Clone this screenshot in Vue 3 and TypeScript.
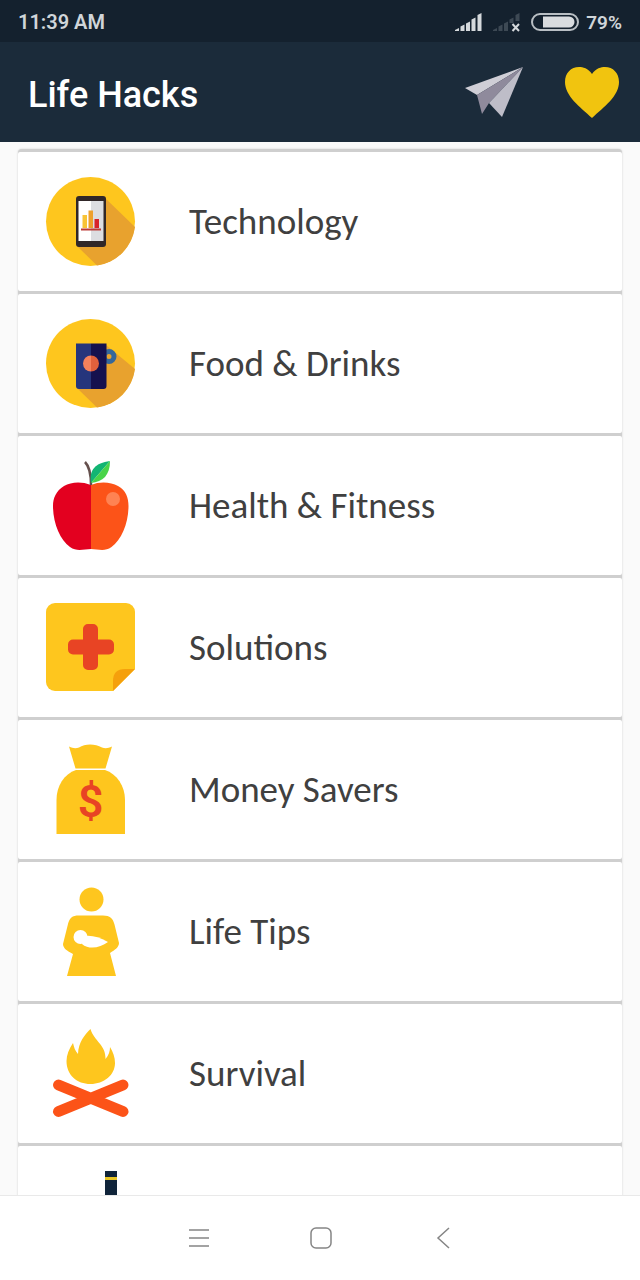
<script setup lang="ts">
interface Category {
  id: string
  label: string
}

const categories: Category[] = [
  { id: 'technology', label: 'Technology' },
  { id: 'food', label: 'Food & Drinks' },
  { id: 'health', label: 'Health & Fitness' },
  { id: 'solutions', label: 'Solutions' },
  { id: 'money', label: 'Money Savers' },
  { id: 'life', label: 'Life Tips' },
  { id: 'survival', label: 'Survival' },
  { id: 'more', label: '' },
]
</script>

<template>
  <div class="screen">
    <div class="status">
      <span class="time">11:39 AM</span>
      <div class="indicators">
        <svg class="signal" viewBox="0 0 28 20" aria-hidden="true">
          <path d="M0 18l4-2v3H0zM5.500 14.500l4-2V19h-4zM11 11.500l4-2V19h-4zM16.500 7.500l4-2V19h-4zM22.500 3l4-2v18h-4z" fill="#d5d9dc" />
        </svg>
        <svg class="signal" viewBox="0 0 28 20" aria-hidden="true">
          <path d="M0 18l4-2v3H0zM5.500 14.500l4-2V19h-4zM11 11.500l4-2V19h-4zM16.500 7.500l4-2V11h-4zM22.500 3l4-2v8h-4z" fill="#3d4954" />
          <path d="M19.500 12l6.500 7M26 12l-6.500 7" stroke="#d5d9dc" stroke-width="2" />
        </svg>
        <svg class="battery" viewBox="0 0 48 18" aria-hidden="true">
          <rect x="1" y="1" width="46" height="16" rx="8" fill="none" stroke="#b9bfc4" stroke-width="2" />
          <path d="M12 3.500h26a5.500 5.500 0 0 1 0 11H12z" fill="#d9dcdf" />
        </svg>
        <span>79%</span>
      </div>
    </div>

    <header class="bar">
      <h1>Life Hacks</h1>
      <button type="button" aria-label="Share">
        <svg class="plane" viewBox="0 0 58 52">
          <path d="M58 1L0 22l12 7z" fill="#cfced6" />
          <path d="M58 1L12 29l5 19 7-11z" fill="#8f8a9c" />
          <path d="M58 1L24 37l13 14z" fill="#bebdc8" />
        </svg>
      </button>
      <button type="button" aria-label="Favourites">
        <svg class="heart" viewBox="0 0 54 52">
          <path d="M27 8C23 2 18 1 14 1 6 1 0 7 0 16c0 14 15 25 27 36 12-11 27-22 27-36C54 7 48 1 40 1c-4 0-9 1-13 7z" fill="#f1c40f" />
        </svg>
      </button>
    </header>

    <main class="content">
      <ul class="list">
        <li v-for="item in categories" :key="item.id">
          <a href="#" :aria-label="item.label || 'More'">
            <svg class="icon" viewBox="0 0 90 90" aria-hidden="true">
              <template v-if="item.id === 'technology'">
                <circle cx="44.500" cy="44.500" r="44.500" fill="#fec61e" />
                <path d="M58 20l31 30A44.500 44.500 0 0 1 51 88.500L31 69z" fill="#e8a22e" />
                <rect x="30" y="19" width="30" height="51" rx="3" fill="#302728" />
                <path d="M32.500 24H45v40H32.500z" fill="#fff" />
                <path d="M45 24h12.500v40H45z" fill="#dcdde1" />
                <path d="M36.500 38H41v13h-4.500z" fill="#f8c437" />
                <path d="M42.500 33.500H47V51h-4.500z" fill="#eda02d" />
                <path d="M48.500 42H53v9h-4.500z" fill="#d8222b" />
                <path d="M35 52.500h20" stroke="#bd3b36" stroke-width="2" />
              </template>
              <template v-else-if="item.id === 'food'">
                <circle cx="44.500" cy="44.500" r="44.500" fill="#fec61e" />
                <path d="M60 26l29 24A44.500 44.500 0 0 1 51 88.500L31 69z" fill="#e8a22e" />
                <circle cx="63" cy="37.500" r="5" fill="none" stroke="#35679a" stroke-width="5" />
                <path d="M30 24.500h15V70H33a3 3 0 0 1-3-3z" fill="#25357c" />
                <path d="M45 24.500h15.500V67a3 3 0 0 1-3 3H45z" fill="#15114e" />
                <path d="M45 36.500a8 8 0 0 0 0 16z" fill="#f4815c" />
                <path d="M45 36.500a8 8 0 0 1 0 16z" fill="#e0603c" />
              </template>
              <template v-else-if="item.id === 'health'">
                <path d="M45 24C35 20 25 21 18 25 10 30 7 37 7 45c0 17 7 34 17 41 7 5 14 2 21 2z" fill="#e3001f" />
                <path d="M45 24c9-4 20-3 27 1 8 4 10.500 12 10.500 20 0 17-7 34-17 41-7 5-13.500 2-20.500 2z" fill="#fc5318" />
                <path d="M39 1c5 5 6 13 6 23" fill="none" stroke="#65504d" stroke-width="2.500" />
                <path d="M45 22C43 9 49 2 64 0z" fill="#12b573" />
                <path d="M64 0c0 14-7 21-19 22z" fill="#49d449" />
                <circle cx="67" cy="38" r="7" fill="#fe8353" />
              </template>
              <template v-else-if="item.id === 'solutions'">
                <path d="M9 0h71a9 9 0 0 1 9 9v57L67 88H9a9 9 0 0 1-9-9V9a9 9 0 0 1 9-9z" fill="#fec61e" />
                <path d="M67 88V78c0-8 4-12 12-12h10z" fill="#f5a00c" />
                <path d="M42 21h5a5 5 0 0 1 5 5v10.500h11a5 5 0 0 1 5 5v5a5 5 0 0 1-5 5H52V62a5 5 0 0 1-5 5h-5a5 5 0 0 1-5-5V51.500H27a5 5 0 0 1-5-5v-5a5 5 0 0 1 5-5h10V26a5 5 0 0 1 5-5z" fill="#e84424" />
              </template>
              <template v-else-if="item.id === 'money'">
                <path d="M23 1.500c4 2 7 2 10 1 6-4 16-4 23 0 3 1 6 1 10-1L59.500 23.500h-30z" fill="#fec61e" />
                <path d="M30 25h29c12 4 20 16 20 30v34H10.500V55C10.500 41 18 29 30 25z" fill="#fec61e" />
                <text class="dollar" x="44.500" y="72" text-anchor="middle">$</text>
              </template>
              <template v-else-if="item.id === 'life'">
                <circle cx="45.500" cy="12.500" r="12" fill="#fec61e" />
                <path d="M33 28.500h24c7 0 10 3 11.500 9L73 56c0 4-4 7-9 10l6 23H21l6-22c-6-3-10-6-10-10l5-20c1.500-6 4-8.500 11-8.500z" fill="#fec61e" />
                <circle cx="34.500" cy="50" r="7" fill="#fff" />
                <path d="M38 49c8-1 15 1 24 6-8 6-19 8-26 2z" fill="#fff" />
              </template>
              <template v-else-if="item.id === 'survival'">
                <path d="M44.500 0c-6 6-12 13-12.500 25-3-3-4-7-5-11-4 6-6.500 12-6.500 18C20.500 46 31 55 44.500 55S69 46 69 34c0-6-2-11-5-16 0 4-1 8-4.500 12C60 16 48 12 44.500 0z" fill="#fec61e" />
                <path d="M12.500 56L77 82.500M77 56L12.500 82.500" stroke="#fc5318" stroke-width="11" stroke-linecap="round" />
              </template>
              <template v-else>
                <path d="M59 0h12v90H59z" fill="#10243a" />
                <path d="M59 6h12v3H59z" fill="#e8c422" />
              </template>
            </svg>
            <span>{{ item.label }}</span>
          </a>
        </li>
      </ul>
    </main>

    <nav class="keys">
      <button type="button" aria-label="Recent apps">
        <svg viewBox="0 0 24 24"><path d="M2 4h20M2 12h20M2 20h20" /></svg>
      </button>
      <button type="button" aria-label="Home">
        <svg viewBox="0 0 24 24"><rect x="2" y="2" width="20" height="20" rx="5" /></svg>
      </button>
      <button type="button" aria-label="Back">
        <svg viewBox="0 0 24 24"><path d="M18 2L7 12l11 10" /></svg>
      </button>
    </nav>
  </div>
</template>

<style>
body {
  margin: 0;
}
</style>

<style scoped>
.screen {
  display: flex;
  flex-direction: column;
  height: 100vh;
  background: #fafafa;
  font-family: Roboto, 'Liberation Sans', sans-serif;
}

button {
  display: flex;
  padding: 0;
  border: 0;
  background: none;
}

.status {
  display: flex;
  flex: none;
  align-items: center;
  justify-content: space-between;
  height: 42px;
  padding: 2px 18px 0;
  box-sizing: border-box;
  background: #14212e;
  color: #d0d5d9;
  font-size: 19px;
  font-weight: 600;
}

.time {
  font-size: 20px;
}

.indicators {
  display: flex;
  align-items: center;
  gap: 10px;
}

.signal {
  width: 28px;
  height: 20px;
}

.battery {
  width: 48px;
  height: 18px;
}

.indicators span {
  margin-left: -3px;
}

.bar {
  display: flex;
  flex: none;
  align-items: center;
  gap: 42px;
  height: 100px;
  padding: 0 21px 0 28px;
  background: #1b2b3a;
}

h1 {
  flex: 1;
  margin: 0;
  padding-top: 6px;
  color: #fff;
  font-size: 36px;
  font-weight: 500;
}

.plane {
  width: 58px;
  height: 52px;
}

.heart {
  width: 54px;
  height: 52px;
}

.content {
  flex: 1;
  min-height: 0;
  padding: 7px 18px 0;
  overflow: hidden;
}

.list {
  margin: 0;
  padding: 3px 0 0;
  border-radius: 4px;
  background: #cfcfcf;
  box-shadow: 0 0 2px #c8c8c8;
  list-style: none;
}

.list li {
  padding-bottom: 3px;
}

.list a {
  display: flex;
  align-items: center;
  gap: 53px;
  height: 139px;
  padding: 0 28px;
  border-radius: 2px;
  background: #fff;
  color: #404040;
  font-family: Carlito, 'Noto Sans', sans-serif;
  font-size: 37px;
  text-decoration: none;
}

.icon {
  flex: none;
  width: 90px;
  height: 90px;
  overflow: visible;
}

.dollar {
  fill: #e84424;
  font-family: Roboto, sans-serif;
  font-size: 45px;
  font-weight: 600;
}

.keys {
  display: flex;
  flex: none;
  align-items: center;
  justify-content: center;
  gap: 98px;
  height: 84px;
  padding-left: 2px;
  border-top: 1px solid #e9e9e9;
  background: #fff;
}

.keys svg {
  width: 24px;
  height: 24px;
  fill: none;
  stroke: #858585;
  stroke-width: 1.5;
}
</style>
